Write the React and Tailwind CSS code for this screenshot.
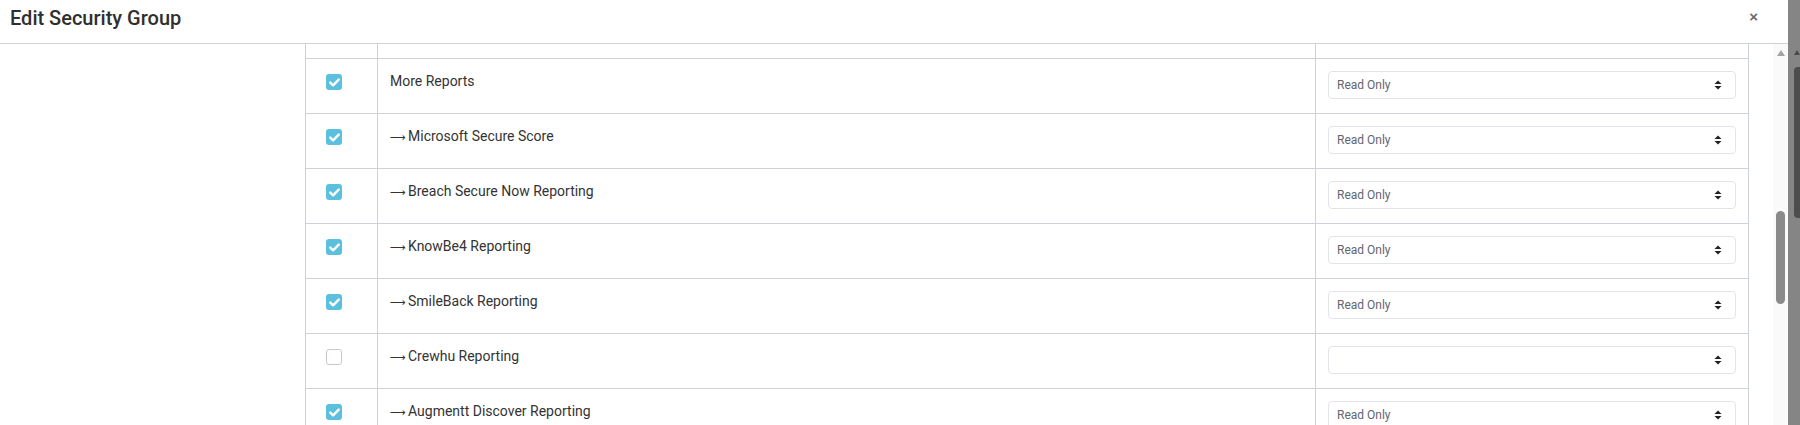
import React from "react";

const rows = [
  { label: "More Reports", arrow: false, checked: true, value: "Read Only" },
  { label: "Microsoft Secure Score", arrow: true, checked: true, value: "Read Only" },
  { label: "Breach Secure Now Reporting", arrow: true, checked: true, value: "Read Only" },
  { label: "KnowBe4 Reporting", arrow: true, checked: true, value: "Read Only" },
  { label: "SmileBack Reporting", arrow: true, checked: true, value: "Read Only" },
  { label: "Crewhu Reporting", arrow: true, checked: false, value: "" },
  { label: "Augmentt Discover Reporting", arrow: true, checked: true, value: "Read Only" },
];

function Checkbox({ checked }) {
  if (!checked) {
    return <div className="w-[16px] h-[16px] rounded-[3px] border border-[#c5c9d0] bg-white" />;
  }
  return (
    <div className="w-[16px] h-[16px] rounded-[3px] bg-[#5bc0de] flex items-center justify-center">
      <svg width="11" height="9" viewBox="0 0 11 9">
        <path d="M1.3 4.6 L4.1 7.3 L9.7 1.6" fill="none" stroke="white" strokeWidth="2.4" strokeLinecap="round" strokeLinejoin="round" />
      </svg>
    </div>
  );
}

function SortArrows() {
  return (
    <svg width="8" height="10" viewBox="0 0 8 10">
      <path d="M0.5 4 L4 0.5 L7.5 4 Z" fill="#222" />
      <path d="M0.5 6 L4 9.5 L7.5 6 Z" fill="#222" />
    </svg>
  );
}

function Select({ value }) {
  return (
    <div className="h-[28px] w-full rounded-[4px] border border-[#e1e4e9] bg-white flex items-center justify-between pl-[8px] pr-[13px]">
      <span className="text-[12px] text-[#5f6670]">{value}</span>
      <SortArrows />
    </div>
  );
}

export default function App() {
  return (
    <div className="w-[1800px] h-[425px] flex overflow-hidden bg-white" style={{ fontFamily: "Roboto, 'Liberation Sans', sans-serif" }}>
      <div className="flex-1 flex flex-col min-w-0">
        <div className="h-[44px] shrink-0 border-b border-[#cdd1d8] flex items-start justify-between pl-[10px] pr-[30px] pt-[4px]">
          <h1 className="text-[20px] leading-[28px] font-medium text-[#2f2f2f]">Edit Security Group</h1>
          <span className="text-[15px] leading-[28px] font-bold text-[#6b6b6b] mt-[-1px]" style={{ fontFamily: "'Liberation Sans', sans-serif" }}>×</span>
        </div>
        <div className="flex-1 flex min-h-0 overflow-hidden">
          <div className="flex-1 pl-[305px] overflow-hidden">
            <div className="w-[1444px] border-l border-[#cdd1d8] text-[14px] text-[#333]">
              <div className="grid grid-cols-[72px_938px_433px] h-[15px] border-b border-[#cdd1d8]">
                <div className="border-r border-[#cdd1d8]" />
                <div className="border-r border-[#cdd1d8]" />
                <div className="border-r border-[#cdd1d8]" />
              </div>
              {rows.map((r, i) => (
                <div key={i} className="grid grid-cols-[72px_938px_433px] h-[55px] border-b border-[#cdd1d8]">
                  <div className="border-r border-[#cdd1d8] pl-[20px] pt-[15px]">
                    <Checkbox checked={r.checked} />
                  </div>
                  <div className="border-r border-[#cdd1d8] pl-[12px] pt-[12px] leading-[20px] whitespace-nowrap">
                    {r.arrow && (
                      <span className="inline-block w-[18px] text-[11px] leading-[20px] overflow-visible" style={{ fontFamily: "'DejaVu Sans', sans-serif" }}>⟶</span>
                    )}
                    {r.label}
                  </div>
                  <div className="border-r border-[#cdd1d8] p-[12px]">
                    <Select value={r.value} />
                  </div>
                </div>
              ))}
            </div>
          </div>
          <div className="w-[15px] shrink-0 bg-[#fafafa] relative">
            <svg className="absolute left-[4px] top-[6px]" width="8" height="6" viewBox="0 0 8 6">
              <path d="M0 6 L4 0 L8 6 Z" fill="#a3a3a3" />
            </svg>
            <div className="absolute left-[3px] top-[167px] w-[9px] h-[93px] rounded-full bg-[#8a8a8a]" />
          </div>
        </div>
      </div>
      <div className="w-[12px] shrink-0 bg-[#858585] relative">
        <svg className="absolute left-[6px] top-[49px]" width="6" height="6" viewBox="0 0 6 6">
          <path d="M0 6 L3 1 L6 6 Z" fill="#4a4a4a" />
        </svg>
        <div className="absolute left-[6px] top-[67px] w-[8px] h-[151px] rounded-l-[4px] bg-[#4d4d4d]" />
      </div>
    </div>
  );
}
